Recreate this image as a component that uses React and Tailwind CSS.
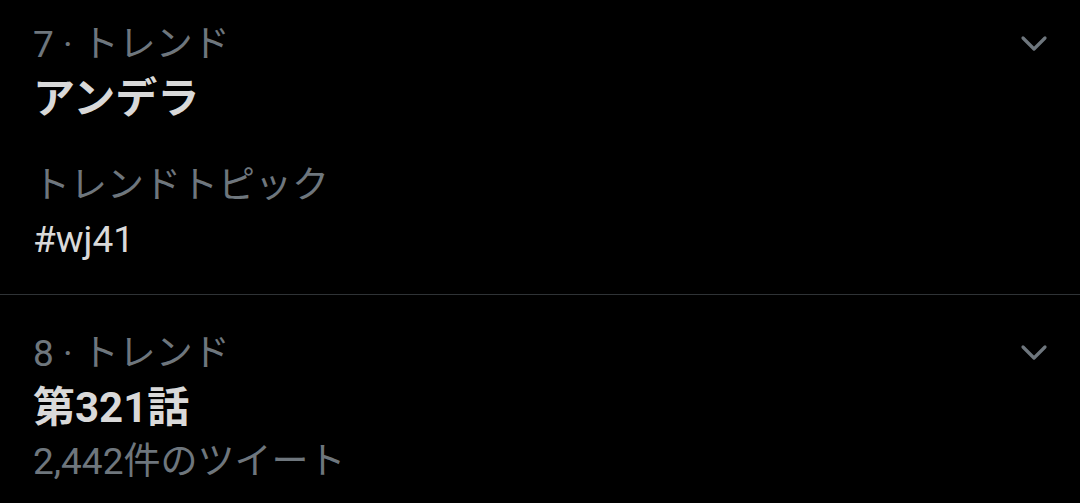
import React from 'react';

const font = { fontFamily: "Roboto, 'Noto Sans CJK JP', sans-serif" };

const Chevron = () => (
  <svg width="28" height="18" viewBox="0 0 28 18" fill="none" className="text-[#6e767d]">
    <path d="M3 3l11 11L25 3" stroke="currentColor" strokeWidth="3.2" strokeLinecap="round" strokeLinejoin="round" />
  </svg>
);

const TrendItem = ({ rank, title, children, className }) => (
  <div className={`flex items-start justify-between pl-[33px] pr-[32px] ${className}`}>
    <div className="flex flex-col">
      <p className="text-[37px] leading-[54px] text-[#6e767d]">{rank} · トレンド</p>
      <p className="text-[42px] leading-[54px] font-bold text-[#d9d9d9]">{title}</p>
      {children}
    </div>
    <div className="pt-[17px]">
      <Chevron />
    </div>
  </div>
);

export default function App() {
  return (
    <div className="w-[1080px] h-[503px] bg-black overflow-hidden" style={font}>
      <TrendItem rank="7" title="アンデラ" className="pt-[18px] pb-[27px] border-b border-[#2f3336]">
        <p className="mt-[33px] text-[37px] leading-[54px] text-[#6e767d]">トレンドトピック</p>
        <p className="text-[37px] leading-[54px] text-[#d9d9d9]">#wj41</p>
      </TrendItem>
      <TrendItem rank="8" title="第321話" className="pt-[32px]">
        <p className="text-[37px] leading-[54px] text-[#6e767d]">2,442件のツイート</p>
      </TrendItem>
    </div>
  );
}
